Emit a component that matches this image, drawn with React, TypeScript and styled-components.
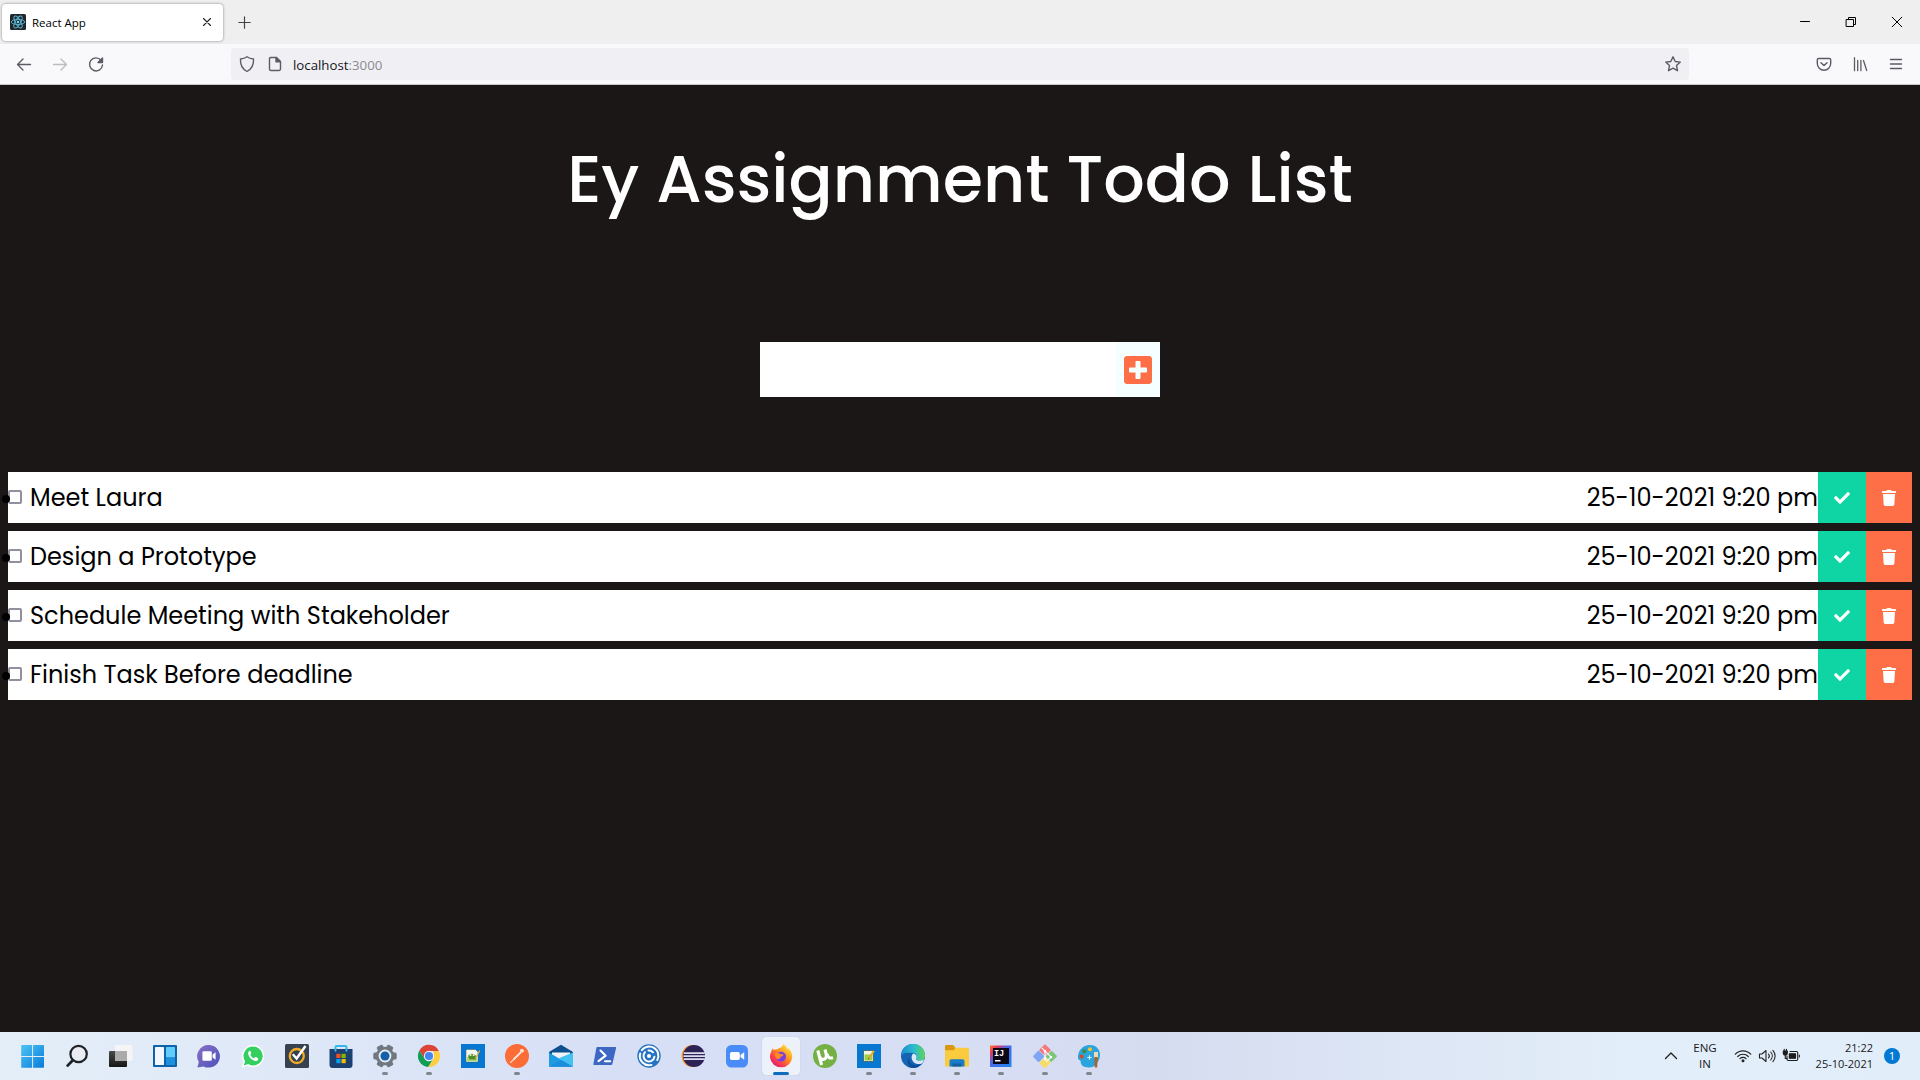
import React from "react";
import styled, { createGlobalStyle } from "styled-components";
import { FaCheck, FaPlusSquare, FaTrash } from "react-icons/fa";

const Global = createGlobalStyle`
  * { box-sizing: border-box; }
  body { margin: 0; background: #1a1716; overflow: hidden; }
`;

const uiFont = `"Segoe UI", "Open Sans", "Noto Sans", sans-serif`;
const pageFont = `Poppins, Inter, "Open Sans", sans-serif`;

const Screen = styled.div`
  width: 1920px;
  height: 1080px;
  display: flex;
  flex-direction: column;
  background: #1a1716;
  font-family: ${uiFont};
`;

/* ---------- browser chrome ---------- */

const TabStrip = styled.div`
  height: 44px;
  flex: none;
  display: flex;
  align-items: center;
  background: #efefef;
  padding-left: 2px;
`;
const Tab = styled.div`
  width: 221px;
  height: 37px;
  border-radius: 4px;
  background: #fff;
  box-shadow: 0 0 3px rgba(0, 0, 0, 0.45);
  display: flex;
  align-items: center;
  padding: 0 11px 0 8px;
  svg {
    flex: none;
  }
`;
const TabTitle = styled.span`
  flex: 1;
  margin-left: 6px;
  font-size: 11.5px;
  line-height: 20px;
  padding-top: 2px;
  color: #000;
`;
const NewTab = styled.div`
  margin-left: 15px;
  margin-right: auto;
  display: flex;
`;
const WindowButtons = styled.div`
  display: flex;
  width: 138px;
`;
const WindowButton = styled.span`
  width: 46px;
  display: flex;
  justify-content: center;
`;
const NavBar = styled.div`
  height: 41px;
  flex: none;
  display: flex;
  align-items: center;
  background: #f9f9fb;
  border-bottom: 1px solid #c9c9cc;
`;
const NavButtons = styled.div`
  display: flex;
  width: 231px;
  padding-left: 14px;
  gap: 16px;
`;
const UrlBar = styled.div`
  width: 1458px;
  height: 32px;
  border-radius: 4px;
  background: #f0f0f4;
  display: flex;
  align-items: center;
  gap: 8px;
  padding: 0 6px;
`;
const UrlText = styled.span`
  flex: 1;
  font-size: 13.25px;
  line-height: 20px;
  padding-top: 1px;
  color: #15141a;
`;
const UrlPort = styled.span`
  color: #8a8a90;
`;
const NavTools = styled.div`
  margin-left: auto;
  display: flex;
  gap: 16px;
  padding-right: 14px;
`;

/* ---------- todo page ---------- */

const Page = styled.main`
  flex: 1;
  min-height: 0;
  display: flex;
  flex-direction: column;
  align-items: center;
  font-family: ${pageFont};
`;
const Heading = styled.h1`
  margin: 46px 0 0;
  height: 98px;
  line-height: 97px;
  font-size: 65.2px;
  font-weight: 500;
  color: #fff;
  white-space: nowrap;
`;
const AddForm = styled.div`
  margin-top: 113px;
  width: 400px;
  height: 55px;
  display: flex;
`;
const AddInput = styled.input`
  flex: 1;
  min-width: 0;
  border: 0;
  background: #fff;
`;
const AddButton = styled.button`
  width: 44px;
  border: 0;
  padding: 0;
  background: #f5ffff;
  color: #ff6f47;
  display: flex;
  align-items: center;
  justify-content: center;
`;
const TaskList = styled.ul`
  list-style: none;
  margin: 75px 0 0;
  padding: 0 8px;
  width: 100%;
  display: flex;
  flex-direction: column;
  gap: 8px;
`;
const Task = styled.li`
  height: 51px;
  display: flex;
  align-items: center;
  background: #fff;
  font-size: 24px;
  line-height: 50px;
  color: #000;
`;
const Bullet = styled.span`
  width: 8px;
  height: 8px;
  border-radius: 50%;
  background: #000;
  margin: 3px 0 0 -6px;
  z-index: 1;
`;
const Check = styled.span`
  width: 14px;
  height: 14px;
  margin: 0 8px 1px -2px;
  border: 2px solid #8f8f9d;
  border-radius: 2px;
  background: #fff;
`;
const TaskName = styled.span`
  flex: 1;
  padding-top: 1px;
  white-space: nowrap;
`;
const TaskDate = styled.span`
  padding-top: 1px;
  white-space: nowrap;
`;
const Action = styled.button<{ $bg: string; $w: number }>`
  width: ${(p) => p.$w}px;
  height: 51px;
  border: 0;
  padding: 1px 0 0;
  background: ${(p) => p.$bg};
  color: #fff;
  display: flex;
  align-items: center;
  justify-content: center;
`;

/* ---------- taskbar ---------- */

const Taskbar = styled.footer`
  height: 48px;
  flex: none;
  display: flex;
  justify-content: space-between;
  padding-left: 11px;
  background: linear-gradient(90deg, #e4eef8 0, #dfe8f7 300px, #d6dff5 620px, #d7def4 1000px, #d5dcf0 1160px, #dde6f5 1400px, #e2eef9 1640px, #e1edf9 100%);
`;
const Apps = styled.div`
  display: flex;
`;
const AppCell = styled.div<{ $active?: boolean }>`
  width: 38px;
  height: 38px;
  margin: 5px 3px;
  border-radius: 4px;
  background: ${(p) => (p.$active ? "#edf1fa" : "transparent")};
  box-shadow: ${(p) => (p.$active ? "0 0 1px rgba(90, 100, 130, 0.4)" : "none")};
  display: flex;
  flex-direction: column;
  align-items: center;
  justify-content: space-between;
  padding-top: 7px;
`;
const Indicator = styled.span<{ $kind: "none" | "open" | "active" }>`
  width: ${(p) => (p.$kind === "active" ? 16 : 6)}px;
  height: 3px;
  border-radius: 2px;
  background: ${(p) => (p.$kind === "none" ? "transparent" : p.$kind === "active" ? "#0f6cbd" : "#80858f")};
`;
const Tray = styled.div`
  display: flex;
  align-items: center;
  padding-right: 20px;
  color: #191919;
  font-size: 11px;
  line-height: 16px;
`;
const Language = styled.div`
  width: 40px;
  margin-left: 6px;
  font-size: 11.5px;
  text-align: center;
`;
const TrayIcons = styled.div`
  display: flex;
  gap: 4px;
  margin-left: 8px;
`;
const Clock = styled.div`
  width: 69px;
  margin-left: 3px;
  text-align: right;
  white-space: nowrap;
`;
const Badge = styled.span`
  width: 16px;
  height: 16px;
  margin-left: 11px;
  border-radius: 50%;
  background: #0078d4;
  color: #fff;
  font-size: 11.5px;
  line-height: 16px;
  text-align: center;
`;

/* ---------- line icons ---------- */

type LineProps = { size?: number; color?: string; width?: number; children: React.ReactNode };
const Line = ({ size = 20, color = "#5b5b66", width = 1.4, children }: LineProps) => (
  <svg width={size} height={size} viewBox={`0 0 ${size} ${size}`} fill="none" stroke={color} strokeWidth={width} strokeLinecap="round" strokeLinejoin="round">
    {children}
  </svg>
);

const ReactLogo = () => (
  <svg width="16" height="16" viewBox="0 0 16 16">
    <rect width="16" height="16" rx="1.5" fill="#20262c" />
    <g fill="none" stroke="#5bb9d4" strokeWidth="0.9">
      <ellipse cx="8" cy="8" rx="6.7" ry="2.6" />
      <ellipse cx="8" cy="8" rx="6.7" ry="2.6" transform="rotate(60 8 8)" />
      <ellipse cx="8" cy="8" rx="6.7" ry="2.6" transform="rotate(120 8 8)" />
    </g>
    <circle cx="8" cy="8" r="1.3" fill="#61dafb" />
  </svg>
);

/* ---------- taskbar icons, drawn on a 24px grid ---------- */

const StartIcon = () => (
  <>
    <linearGradient id="st" x1="0" y1="0" x2="1" y2="1" gradientUnits="objectBoundingBox">
      <stop offset="0" stopColor="#4cc4f5" />
      <stop offset="1" stopColor="#0a7bd8" />
    </linearGradient>
    <path fill="url(#st)" d="M.2 1.8a.8.8 0 0 1 .8-.8H11.1v10.9H.2zM12.1 1h10.1a.8.8 0 0 1 .8.8v10.1H12.1zM.2 12.9h10.9v10.9H1a.8.8 0 0 1-.8-.8zM12.1 12.9H23V23a.8.8 0 0 1-.8.8H12.1z" />
  </>
);
const SearchIcon = () => (
  <g fill="none">
    <circle cx="13.6" cy="10" r="8.2" stroke="#1f2328" strokeWidth="2.2" fill="#e9edf3" />
    <path d="M7.8 16.2 2.6 21.6" stroke="#1f2328" strokeWidth="2.8" strokeLinecap="round" />
  </g>
);
const TaskViewIcon = () => (
  <>
    <linearGradient id="tv" x1="0" y1="0" x2="0" y2="1">
      <stop offset="0" stopColor="#4a4a4a" />
      <stop offset="1" stopColor="#151515" />
    </linearGradient>
    <rect x="0" y="7" width="18" height="16" rx="1" fill="url(#tv)" />
    <rect x="6" y="1" width="17.5" height="16" rx="1" fill="#f5f5f5" />
    <rect x="6" y="7" width="12" height="10" fill="#ababab" />
  </>
);
const WidgetsIcon = () => (
  <>
    <rect x="0" y="1" width="24" height="22" rx="1" fill="#0f63a8" />
    <rect x="2" y="3" width="9" height="18" rx="0.6" fill="#f3f6fa" />
    <rect x="13" y="3" width="9" height="10.5" rx="0.6" fill="#62cdfb" />
    <rect x="13" y="13.5" width="9" height="7.5" rx="0.6" fill="#1e90e0" />
  </>
);
const ChatIcon = () => (
  <>
    <linearGradient id="ch" x1="0" y1="0" x2="1" y2="1">
      <stop offset="0" stopColor="#8a6fc4" />
      <stop offset="1" stopColor="#4b53bc" />
    </linearGradient>
    <path fill="url(#ch)" d="M11.6 1a11.3 11.3 0 1 1-5 21.4L.4 23.4l1.4-5.3A11.3 11.3 0 0 1 11.6 1z" />
    <rect x="5.4" y="7.2" width="9.4" height="9.6" rx="1.4" fill="#fff" />
    <path d="M15.6 10.6 18.6 8.2v7.6L15.6 13.4z" fill="#fff" />
  </>
);
const WhatsAppIcon = () => (
  <>
    <path fill="#fff" d="M12 1a11 11 0 1 1-5.2 20.7L.7 23.5l1.8-6A11 11 0 0 1 12 1z" />
    <path fill="#33d060" d="M12 2.5a9.5 9.5 0 1 1-4.8 17.6l-4.4 1.3 1.3-4.2A9.5 9.5 0 0 1 12 2.5z" />
    <path fill="#fff" d="M8.3 7c-.9.6-1.4 1.6-1.1 2.9.7 3.4 3.5 6.2 6.8 7.1 1.4.3 2.7-.3 3.1-1.6.2-.8.1-1.2-.5-1.5l-1.7-.8c-.5-.2-.8-.1-1.1.3l-.7.9c-1.8-.7-3-1.9-3.8-3.6l.7-.9c.3-.4.3-.7.1-1.1l-.8-1.7c-.2-.3-.6-.3-1 0z" />
  </>
);
const NortonIcon = () => (
  <>
    <rect width="24" height="24" rx="1.5" fill="#36424f" />
    <circle cx="11.8" cy="12" r="7" fill="none" stroke="#f2ab27" strokeWidth="2.3" />
    <path d="M7.8 10.2 11.6 14.5 20.5 2" fill="none" stroke="#fff" strokeWidth="2.4" />
  </>
);
const StoreIcon = () => (
  <>
    <path d="M6.5 7V3.3Q6.5 2 7.8 2h8.4Q17.5 2 17.5 3.3V7" fill="none" stroke="#35b6ea" strokeWidth="1.9" />
    <path d="M.5 5h23v16a3 3 0 0 1-3 3h-17a3 3 0 0 1-3-3z" fill="#1c4170" />
    <path d="M6.5 5v1.8M17.5 5v1.8" stroke="#35b6ea" strokeWidth="1.9" strokeLinecap="round" />
    <path fill="#f25022" d="M7.3 9.8h4.2V14H7.3z" />
    <path fill="#7fba00" d="M12.5 9.8h4.2V14h-4.2z" />
    <path fill="#00a4ef" d="M7.3 15h4.2v4.2H7.3z" />
    <path fill="#ffb900" d="M12.5 15h4.2v4.2h-4.2z" />
  </>
);
const SettingsIcon = () => (
  <>
    <g fill="#6f7780">
      {[0, 60, 120].map((a) => (
        <rect key={a} x="8.6" y="0.3" width="6.8" height="23.4" rx="1.5" transform={`rotate(${a + 30} 12 12)`} />
      ))}
      <circle cx="12" cy="12" r="9.3" />
    </g>
    <circle cx="12" cy="12" r="6.4" fill="#e7ebf2" />
    <circle cx="12" cy="12" r="4.5" fill="#1261a9" />
  </>
);
const ChromeIcon = () => (
  <g transform="translate(0.6 0.6) scale(0.95)">
    <path fill="#db4437" d="M1.9 6.2A11.5 11.5 0 0 1 22.3 6.7H12l-4.7 8.2z" />
    <path fill="#0f9d58" d="M1.9 6.2A11.5 11.5 0 0 0 11.3 23.5L16.7 14.7 12 17.4 7.3 14.8z" />
    <path fill="#ffcd40" d="M22.3 6.7A11.5 11.5 0 0 1 11.3 23.5l5.4-8.8V6.7z" />
    <circle cx="12" cy="12" r="5.4" fill="#f1f1f1" />
    <circle cx="12" cy="12" r="4.3" fill="#4285f4" />
  </g>
);
const NotepadTile = ({ classic }: { classic?: boolean }) => (
  <>
    <rect width="24" height="24" fill="#0778d2" />
    {classic ? (
      <>
        <path fill="#f4f7ee" stroke="#4d5b54" strokeWidth="0.5" d="M5 5.5h9.5l2.500 2.500v10H5z" />
        <path fill="#a9d96a" d="M6 13h10v4.2H6z" />
        <path fill="#4d8a2c" d="M7 12c1.5-3 6.5-3 8 0v3.500H8.500z" />
        <circle cx="9.5" cy="11" r="1.1" fill="#e9f7c8" />
        <circle cx="12.7" cy="11" r="1.1" fill="#e9f7c8" />
        <path d="M14.5 14.5 18.7 6.5" stroke="#d9b44a" strokeWidth="1.3" />
      </>
    ) : (
      <>
        <rect x="6.5" y="6.5" width="10" height="11" fill="#eef6e2" stroke="#4a5960" strokeWidth="0.8" />
        <path fill="#9cd04b" d="M7.5 10.5h8v6h-8z" />
        <path d="M11.5 14.5 17 7" stroke="#e0a92e" strokeWidth="2" />
        <path d="m10.8 15.6.6-1.7 1 .8z" fill="#333" />
      </>
    )}
  </>
);
const PostmanIcon = () => (
  <>
    <circle cx="12" cy="12" r="12" fill="#fb6c37" />
    <path d="M5.5 18.5 15.5 9" stroke="#ffe2d6" strokeWidth="1.1" strokeLinecap="round" />
    <path d="M9 15 15.5 8.6" stroke="#ffe2d6" strokeWidth="1.9" strokeLinecap="round" />
    <circle cx="16.9" cy="6.8" r="2" fill="#ffe2d6" />
  </>
);
const MailIcon = () => (
  <>
    <path d="M0 8 12 .8 24 8v5H0z" fill="#0d4f8f" />
    <path d="M3 8.5h18v8H3z" fill="#f0f3f7" />
    <path d="M0 8.5 24 22.8H0z" fill="#1d9be3" />
    <path d="M24 8.5V22.8L9 14.5z" fill="#43c1f2" />
    <path d="M0 22.8 12.5 16 24 22.8z" fill="#1b8ddb" />
  </>
);
const PowerShellIcon = () => (
  <>
    <path d="M4.3 3H22.3a.8.8 0 0 1 .8 1L19.3 20.2a1 1 0 0 1-1 .8H1.2a.8.8 0 0 1-.8-1L3.4 3.8A1 1 0 0 1 4.3 3z" fill="#3c68c4" />
    <path d="M7.5 6.5 12.7 11.7 5.5 17.2M12 17.2h5.2" fill="none" stroke="#fff" strokeWidth="2.1" strokeLinecap="round" strokeLinejoin="round" />
  </>
);
const CitrixIcon = () => (
  <>
    <circle cx="12" cy="12" r="11.7" fill="#2673c2" />
    <g fill="none" stroke="#fff" strokeWidth="2" strokeLinecap="round">
      <path d="M3.2 9.5A9.2 9.2 0 0 0 14.5 20.9" />
      <path d="M4.8 6.2A9.2 9.2 0 0 1 20.3 16" />
      <path d="M8 8.1A5.5 5.5 0 1 0 17.4 12.8" />
      <path d="M11.5 6.5A5.5 5.5 0 0 1 16 8.3" />
    </g>
    <circle cx="12" cy="12" r="2" fill="#fff" />
  </>
);
const EclipseIcon = () => (
  <>
    <circle cx="11.5" cy="12" r="11" fill="#f5962a" />
    <circle cx="13" cy="12" r="11" fill="#2c2255" />
    <path fill="#dcdcf0" d="M3 8.2h20.8v1.7H2.5zM2.4 11.2H24v1.7H2.4zM2.5 14.2h21.3v1.7H3z" />
  </>
);
const ZoomIcon = () => (
  <>
    <rect x="1" y="1" width="22" height="22.5" rx="5.5" fill="#4a8cf7" />
    <rect x="5" y="8" width="9.8" height="8" rx="1.8" fill="#fff" />
    <path d="M15.5 11 19.2 8.2v7.6L15.5 13z" fill="#fff" />
  </>
);
const FirefoxIcon = () => (
  <>
    <linearGradient id="ff" x1="0.85" y1="0.1" x2="0.2" y2="0.9">
      <stop offset="0" stopColor="#ffe338" />
      <stop offset="0.45" stopColor="#ff8a1d" />
      <stop offset="0.8" stopColor="#fb3a50" />
      <stop offset="1" stopColor="#e3216f" />
    </linearGradient>
    <path fill="url(#ff)" d="M2.2 7.8C2.6 6 3.4 4.7 4 4.2c.1.9.4 1.5.8 1.9 1.2-.7 2.4-.9 3.6-.7C9.5 4.3 10.9 3.7 12 3.6 13.2 2.4 13.9 1.4 14.2.3c2.2 1.3 3.7 3.2 4.6 5.2.3-.3.4-.9.3-1.5 3 2.5 4.2 5.7 4.2 8.8A11.2 11.2 0 0 1 1 13.5C.9 11.3 1.4 9.3 2.2 7.8z" />
    <circle cx="12" cy="12.8" r="5" fill="#7a3fe0" />
    <path d="M6 9.5c2-1 4-.5 5.5.5 1.5.3 2.5.3 3 1-.5 1.3-2 1.4-3 2 0 1.5-1.6 2.6-3.5 2C6.5 14 6 12 6 9.5z" fill="#ff8b22" />
  </>
);
const UTorrentIcon = () => (
  <>
    <circle cx="12" cy="12" r="12" fill="#74b043" />
    <path d="M4.8 6.5 8.6 21M5.6 9.2c1 4.8 2.5 6.8 5.2 6.1 2.5-.6 3-3 2.1-6.4L12 5.5M14 10c.9 3.6 2.5 4.8 6 3.6" fill="none" stroke="#fff" strokeWidth="3.1" />
  </>
);
const EdgeIcon = () => (
  <>
    <linearGradient id="eg" x1="0" y1="0.3" x2="1" y2="0.3">
      <stop offset="0" stopColor="#1b8bd2" />
      <stop offset="0.55" stopColor="#2bbcd0" />
      <stop offset="1" stopColor="#5fd455" />
    </linearGradient>
    <circle cx="12" cy="12" r="12" fill="#1464b4" />
    <path fill="url(#eg)" d="M0 12A12 12 0 0 1 24 11.5c.1 3.3-2.3 5.2-5.5 5.2-2.7 0-4.2-1-3.4-2.2 1.7-2.7-.3-5.7-3.8-5.700C6 8.8 2 8.5 0 12z" />
    <path fill="#0d4f96" d="M8 14c0 5 4.5 8.3 9.5 6.9 1.6-.4 3-1.2 3.8-1.7A12 12 0 0 1 10 23.800C6.500 21.500 5.500 17 8 14z" />
    <path fill="#dbe6f6" d="M12.2 9.5c2.8.4 4.2 2.8 2.9 5-.8 1.2.7 2.2 3.4 2.2 2.5 0 4.3-.8 5-2.2-.4 1.7-1 3-2.2 4.7-4.5 2.3-9.4 0-10.5-4.2-.5-2 0-4.5 1.4-5.5z" />
  </>
);
const FolderIcon = () => (
  <>
    <path d="M0 2.2A1.2 1.2 0 0 1 1.2 1H8l2 2v4H0z" fill="#d9960f" />
    <rect x="0" y="3.8" width="24" height="18.7" rx="1" fill="#fbcb3f" />
    <path d="M0 6.3h8.3L10.8 3.8h-1L0 3z" fill="#d9960f" />
    <path d="M4.5 22.5V17a1.8 1.8 0 0 1 1.8-1.8h11.4A1.8 1.8 0 0 1 19.5 17v5.500z" fill="#1a7cc9" />
    <path d="M7.5 19.5h9v3h-9z" fill="#14619f" />
  </>
);
const MonoText = styled.text`
  font: bold 8.5px "Liberation Mono", monospace;
  fill: #fff;
`;
const IntelliJIcon = () => (
  <>
    <linearGradient id="ij" x1="0" y1="0" x2="1" y2="1">
      <stop offset="0" stopColor="#fc801d" />
      <stop offset="0.2" stopColor="#e8365f" />
      <stop offset="0.42" stopColor="#4a6ae8" />
      <stop offset="1" stopColor="#1c86f2" />
    </linearGradient>
    <rect x="1" y="1.5" width="21.5" height="21.5" fill="url(#ij)" />
    <rect x="4" y="4" width="16" height="16" fill="#0b0714" />
    <MonoText x="5" y="11.5">IJ</MonoText>
    <rect x="6" y="16" width="5.5" height="1.5" fill="#fff" />
  </>
);
const GitIcon = () => (
  <g transform="rotate(45 12 12)">
    <rect x="3.5" y="3.5" width="8.5" height="8.5" rx="1" fill="#f4787c" />
    <rect x="12.8" y="3.5" width="8" height="8.5" rx="1" fill="#7dc67a" />
    <rect x="3.5" y="12.5" width="8.5" height="8.5" rx="1" fill="#7ea6f2" />
    <rect x="12.8" y="12.5" width="8" height="8.5" rx="1" fill="#f8dc6a" />
    <path d="M4 8.5h13M8.5 8.5 14 14M17 8.5v7" stroke="#fff" strokeWidth="1.1" fill="none" />
    <circle cx="8.5" cy="8.5" r="1.3" fill="#fff" />
    <circle cx="14.5" cy="14" r="1.3" fill="#fff" />
    <circle cx="17" cy="8.5" r="1.3" fill="#fff" />
  </g>
);
const PaintIcon = () => (
  <>
    <path d="M13 1C19.5 1 23.3 6 23 11.5c-.2 3-1.5 5.5-3.5 8.5-1.7 2.5-4.5 3.5-7.5 3.5C6 23.5 3.5 20.5 3.8 18c.2-1.5-2.6-2-2.8-4C.5 7 5.5 1 13 1z" fill="#2ba3dc" />
    <circle cx="7.2" cy="7.3" r="2.1" fill="#3d8b3a" />
    <circle cx="13" cy="5.3" r="2" fill="#f2c230" />
    <circle cx="4.6" cy="12.6" r="2.1" fill="#c8502e" />
    <path d="M12.5 11.3v4.4M10.3 13.5h4.4" stroke="#d5f0fb" strokeWidth="1.2" />
    <path d="M17 8h4v6h-4z" fill="#f0d9b5" />
    <path d="M17.3 13h3.400l-.5 10.500h-2.400z" fill="#a8642a" />
  </>
);

type AppEntry = { name: string; icon: React.ReactNode; state?: "open" | "active" };
const apps: AppEntry[] = [
  { name: "start", icon: <StartIcon /> },
  { name: "search", icon: <SearchIcon /> },
  { name: "taskview", icon: <TaskViewIcon /> },
  { name: "widgets", icon: <WidgetsIcon /> },
  { name: "chat", icon: <ChatIcon /> },
  { name: "whatsapp", icon: <WhatsAppIcon /> },
  { name: "norton", icon: <NortonIcon /> },
  { name: "store", icon: <StoreIcon /> },
  { name: "settings", icon: <SettingsIcon />, state: "open" },
  { name: "chrome", icon: <ChromeIcon />, state: "open" },
  { name: "notepadpp", icon: <NotepadTile classic /> },
  { name: "postman", icon: <PostmanIcon />, state: "open" },
  { name: "mail", icon: <MailIcon /> },
  { name: "powershell", icon: <PowerShellIcon /> },
  { name: "citrix", icon: <CitrixIcon /> },
  { name: "eclipse", icon: <EclipseIcon /> },
  { name: "zoom", icon: <ZoomIcon /> },
  { name: "firefox", icon: <FirefoxIcon />, state: "active" },
  { name: "utorrent", icon: <UTorrentIcon /> },
  { name: "editor", icon: <NotepadTile />, state: "open" },
  { name: "edge", icon: <EdgeIcon />, state: "open" },
  { name: "explorer", icon: <FolderIcon />, state: "open" },
  { name: "intellij", icon: <IntelliJIcon />, state: "open" },
  { name: "git", icon: <GitIcon />, state: "open" },
  { name: "paint", icon: <PaintIcon />, state: "open" },
];

const tasks = [
  "Meet Laura",
  "Design a Prototype",
  "Schedule Meeting with Stakeholder",
  "Finish Task Before deadline",
];

export default function App() {
  return (
    <Screen>
      <Global />
      <TabStrip>
        <Tab>
          <ReactLogo />
          <TabTitle>React App</TabTitle>
          <Line size={10} color="#222" width={1.1}>
            <path d="m1.500 1.500 7 7M8.500 1.500 1.500 8.500" />
          </Line>
        </Tab>
        <NewTab>
          <Line size={13} color="#444" width={1.2}>
            <path d="M6.5.8v11.4M.8 6.5h11.4" />
          </Line>
        </NewTab>
        <WindowButtons>
          <WindowButton>
            <Line size={12} color="#000" width={1}>
              <path d="M1.5 5.5h9" />
            </Line>
          </WindowButton>
          <WindowButton>
            <Line size={12} color="#000" width={1}>
              <path d="M1.5 3.5h7v7h-7zM3.5 3.5v-2h7v7h-2" />
            </Line>
          </WindowButton>
          <WindowButton>
            <Line size={12} color="#000" width={1}>
              <path d="m1.2 1.2 9.6 9.6M10.8 1.2 1.2 10.8" />
            </Line>
          </WindowButton>
        </WindowButtons>
      </TabStrip>

      <NavBar>
        <NavButtons>
          <Line>
            <path d="M16.5 10.5H3.5M9 5l-5.5 5.5L9 16" />
          </Line>
          <Line color="#bcbcc2">
            <path d="M3.5 10.5h13M11 5l5.5 5.5L11 16" />
          </Line>
          <Line>
            <path d="M15 6.2A6.5 6.5 0 1 0 16.5 11" />
            <path d="M16.5 4v4.5H12z" fill="#5b5b66" />
          </Line>
        </NavButtons>
        <UrlBar>
          <Line>
            <path d="M10 2.8c2 1.5 4.2 2 6.5 2.2.4 5.3-1.5 9.7-6.5 12.5C5 14.7 3.1 10.3 3.5 5 5.8 4.8 8 4.3 10 2.8z" />
          </Line>
          <Line>
            <path d="M5.5 3.5h6l4 4V15a1.5 1.5 0 0 1-1.5 1.5H6A1.5 1.5 0 0 1 4.5 15V4.5a1 1 0 0 1 1-1z" />
            <path d="M11 3.5v4.3h4.3z" fill="#5b5b66" />
          </Line>
          <UrlText>
            localhost<UrlPort>:3000</UrlPort>
          </UrlText>
          <Line>
            <path d="m10 2.8 2.2 4.7 5.1.6-3.8 3.5 1 5.1-4.5-2.5-4.5 2.5 1-5.1-3.8-3.5 5.1-.6z" />
          </Line>
        </UrlBar>
        <NavTools>
          <Line>
            <path d="M4.5 4.5h11a1.2 1.2 0 0 1 1.2 1.2V9.5a6.7 6.7 0 0 1-13.4 0V5.700a1.2 1.2 0 0 1 1.2-1.2zM7 8.8l3 2.8 3-2.8" />
          </Line>
          <Line width={1.3}>
            <path d="M4.5 3.7v13M7.7 6.5v10.2M10.9 6.5v10.2M13.5 6.5l3.2 10" />
          </Line>
          <Line>
            <path d="M4.5 5.5h11M4.5 10h11M4.5 14.5h11" />
          </Line>
        </NavTools>
      </NavBar>

      <Page>
        <Heading>Ey Assignment Todo List</Heading>
        <AddForm>
          <AddInput />
          <AddButton>
            <FaPlusSquare size={32} />
          </AddButton>
        </AddForm>
        <TaskList>
          {tasks.map((name) => (
            <Task key={name}>
              <Bullet />
              <Check />
              <TaskName>{name}</TaskName>
              <TaskDate>25-10-2021 9:20 pm</TaskDate>
              <Action $bg="#0fd5a5" $w={48}>
                <FaCheck size={16} />
              </Action>
              <Action $bg="#ff6f47" $w={46}>
                <FaTrash size={16} />
              </Action>
            </Task>
          ))}
        </TaskList>
      </Page>

      <Taskbar>
        <Apps>
          {apps.map((app) => (
            <AppCell key={app.name} $active={app.state === "active"}>
              <svg width="24" height="24" viewBox="0 0 24 24">
                {app.icon}
              </svg>
              <Indicator $kind={app.state ?? "none"} />
            </AppCell>
          ))}
        </Apps>
        <Tray>
          <Line size={16} color="#222" width={1.4}>
            <path d="m2.5 10.5 5.5-5.5 5.5 5.5" />
          </Line>
          <Language>
            ENG
            <br />
            IN
          </Language>
          <TrayIcons>
            <Line color="#222" width={1.2}>
              <path d="M2.3 8.2a10.6 10.6 0 0 1 15.4 0M4.7 10.5a7.4 7.4 0 0 1 10.6 0M7 12.7a4.2 4.2 0 0 1 6 0" />
              <circle cx="10" cy="14.8" r="0.9" fill="#222" />
            </Line>
            <Line color="#222" width={1.1}>
              <path d="M2.5 8H5l4-3.5v11L5 12H2.5zM11.5 8a3 3 0 0 1 0 4M13.7 6a6 6 0 0 1 0 8M15.9 4.3a8.5 8.5 0 0 1 0 11.4" />
            </Line>
            <Line color="#1c1c1c" width={1.1}>
              <path d="M9 5.5h6.5a1.2 1.2 0 0 1 1.2 1.2v6.6a1.2 1.2 0 0 1-1.2 1.2H7.2A1.2 1.2 0 0 1 6 13.3V10" />
              <path d="M8.3 7.7h6.2v4.6H8.3z" fill="#1c1c1c" />
              <path d="M18.3 9v2" />
              <path d="M2.3 5h4v2a2 2 0 0 1-4 0zM3.2 3.2V5M5.4 3.2V5" fill="#1c1c1c" />
              <path d="M4.3 9v3.5H6" />
            </Line>
          </TrayIcons>
          <Clock>
            21:22
            <br />
            25-10-2021
          </Clock>
          <Badge>1</Badge>
        </Tray>
      </Taskbar>
    </Screen>
  );
}
